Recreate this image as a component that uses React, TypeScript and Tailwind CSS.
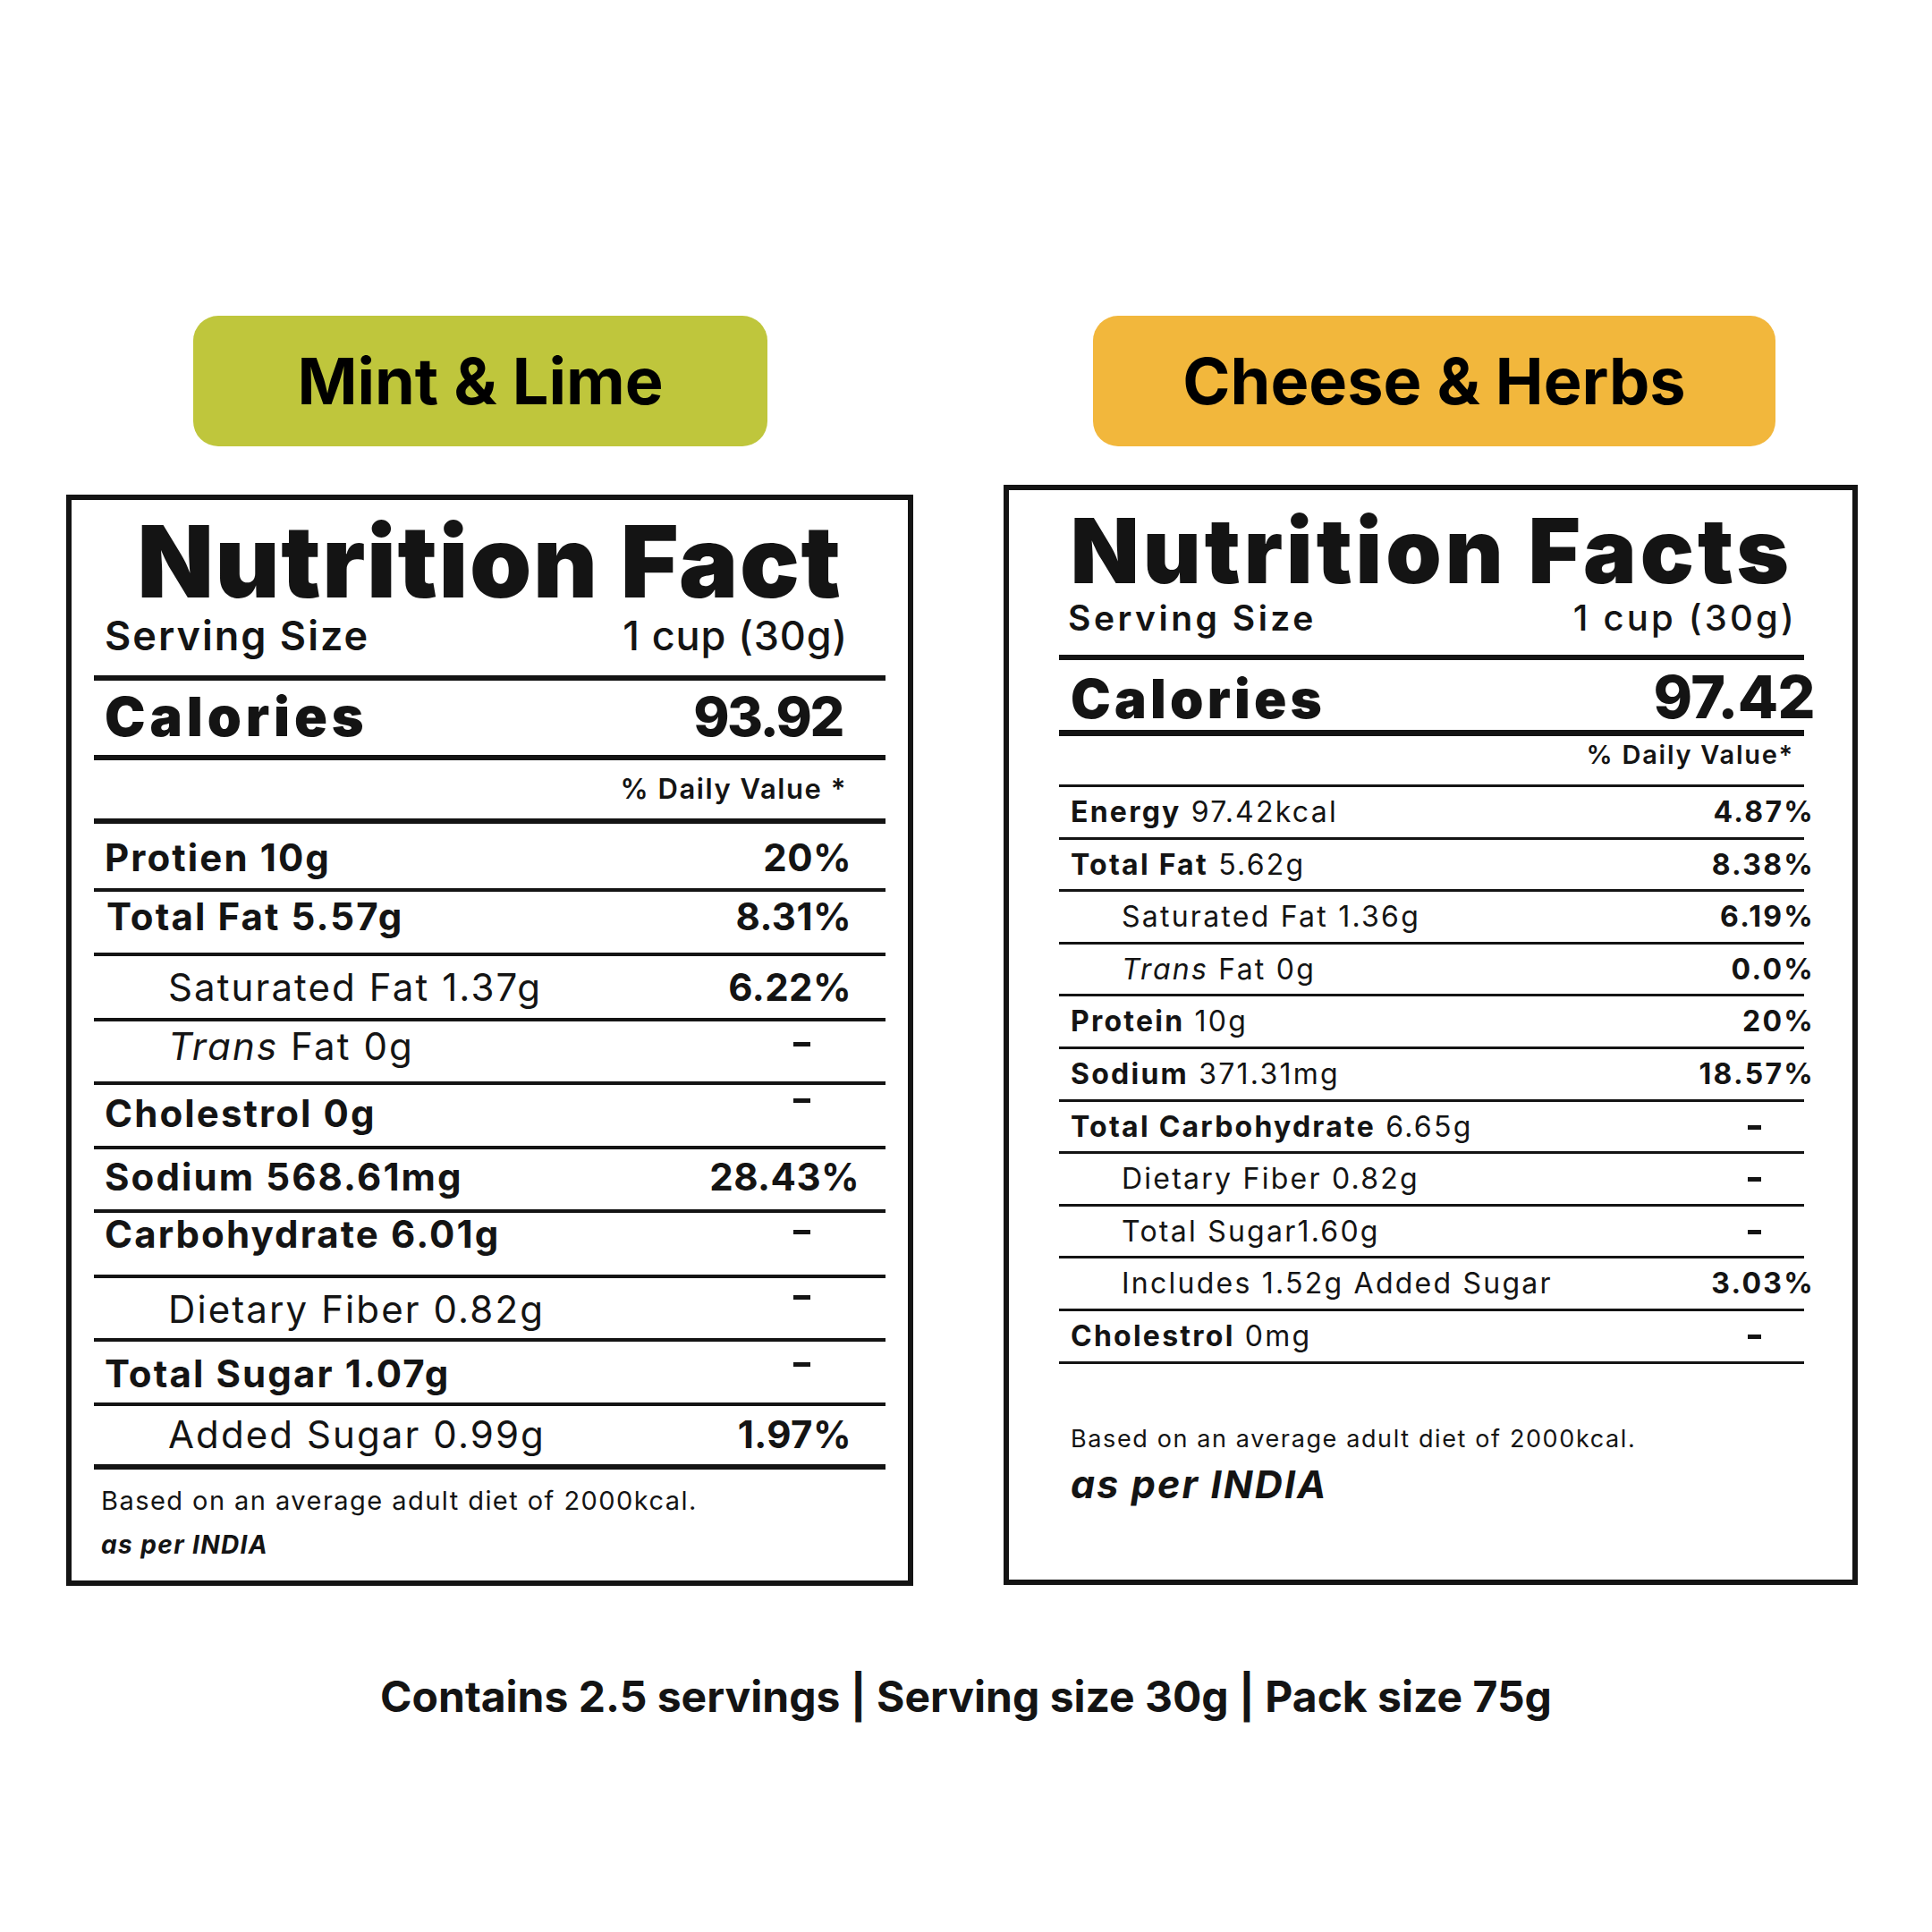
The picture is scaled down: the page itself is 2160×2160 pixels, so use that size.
import React from "react";

type RowL = {
  label: React.ReactNode;
  value?: string;
  cls: string;
  labelCls: string;
  valueCls?: string;
  dashCls?: string;
  borderCls: string;
};

const Dash = ({ cls }: { cls: string }) => (
  <div className={"h-[5px] bg-[#141414] " + cls} />
);

const leftRows: RowL[] = [
  { label: "Protien 10g", value: "20%", cls: "h-[72px] pt-[17px]", labelCls: "pl-[12px] font-bold", valueCls: "pr-[38px]", borderCls: "h-[4px]" },
  { label: "Total Fat 5.57g", value: "8.31%", cls: "h-[68px] pt-[7px]", labelCls: "pl-[14px] font-bold", valueCls: "pr-[38px]", borderCls: "h-[4px]" },
  { label: "Saturated Fat 1.37g", value: "6.22%", cls: "h-[69px] pt-[14px]", labelCls: "pl-[83px] font-normal", valueCls: "pr-[38px]", borderCls: "h-[4px]" },
  { label: (<><span className="italic">Trans</span> Fat 0g</>), cls: "h-[67px] pt-[7px]", labelCls: "pl-[83px] font-normal", dashCls: "w-[19px] mr-[84px] mt-[16px]", borderCls: "h-[4px]" },
  { label: "Cholestrol 0g", cls: "h-[68px] pt-[11px]", labelCls: "pl-[12px] font-bold", dashCls: "w-[19px] mr-[84px] mt-[4px]", borderCls: "h-[4px]" },
  { label: "Sodium 568.61mg", value: "28.43%", cls: "h-[67px] pt-[10px]", labelCls: "pl-[12px] font-bold", valueCls: "pr-[29px]", borderCls: "h-[4px]" },
  { label: "Carbohydrate 6.01g", cls: "h-[69px] pt-[3px]", labelCls: "pl-[12px] font-bold", dashCls: "w-[19px] mr-[84px] mt-[16px]", borderCls: "h-[4px]" },
  { label: "Dietary Fiber 0.82g", cls: "h-[67px] pt-[14px]", labelCls: "pl-[83px] font-normal", dashCls: "w-[19px] mr-[84px] mt-[5px]", borderCls: "h-[4px]" },
  { label: "Total Sugar 1.07g", cls: "h-[68px] pt-[15px]", labelCls: "pl-[12px] font-bold", dashCls: "w-[19px] mr-[84px] mt-[8px]", borderCls: "h-[4px]" },
  { label: "Added Sugar 0.99g", value: "1.97%", cls: "h-[65px] pt-[11px]", labelCls: "pl-[83px] font-normal", valueCls: "pr-[38px]", borderCls: "h-[6px]" },
];

type RowR = {
  bold: string;
  rest: React.ReactNode;
  value?: string;
  indent?: boolean;
};

const rightRows: RowR[] = [
  { bold: "Energy", rest: " 97.42kcal", value: "4.87%" },
  { bold: "Total Fat", rest: " 5.62g", value: "8.38%" },
  { bold: "", rest: "Saturated Fat 1.36g", value: "6.19%", indent: true },
  { bold: "", rest: (<><span className="italic">Trans</span> Fat 0g</>), value: "0.0%", indent: true },
  { bold: "Protein", rest: " 10g", value: "20%" },
  { bold: "Sodium", rest: " 371.31mg", value: "18.57%" },
  { bold: "Total Carbohydrate", rest: " 6.65g" },
  { bold: "", rest: "Dietary Fiber 0.82g", indent: true },
  { bold: "", rest: "Total Sugar1.60g", indent: true },
  { bold: "", rest: "Includes 1.52g Added Sugar", value: "3.03%", indent: true },
  { bold: "Cholestrol", rest: " 0mg" },
];

function LeftPanel() {
  return (
    <div className="w-[947px] h-[1220px] border-[6px] border-[#141414] px-[25px] flex flex-col text-[#141414]">
      <div className="h-[196px] pt-[13px] flex flex-col">
        <div className="text-[111px] leading-none font-black text-center tracking-[0.015em]">Nutrition Fact</div>
        <div className="mt-[5px] flex justify-between items-baseline pl-[12px] pr-[42px] text-[45px] leading-none">
          <span className="font-semibold tracking-[0.045em]">Serving Size</span>
          <span className="font-medium tracking-[0.02em]">1 cup (30g)</span>
        </div>
      </div>
      <div className="h-[6px] bg-[#141414]" />
      <div className="h-[83px] pt-[10px] flex justify-between items-baseline pl-[12px] pr-[48px] text-[61px] leading-none font-black">
        <span className="tracking-[0.08em]">Calories</span>
        <span className="font-extrabold tracking-[-0.04em]">93.92</span>
      </div>
      <div className="h-[6px] bg-[#141414]" />
      <div className="h-[65px] pt-[16px] flex justify-end pr-[43px] text-[31px] leading-none font-semibold tracking-[0.05em]">
        % Daily Value *
      </div>
      <div className="h-[6px] bg-[#141414]" />
      {leftRows.map((r, i) => (
        <React.Fragment key={i}>
          <div className={"flex justify-between items-start text-[42px] leading-none tracking-[0.05em] " + r.cls}>
            <span className={r.labelCls}>{r.label}</span>
            {r.value ? (
              <span className={"font-bold tracking-[0.01em] " + (r.valueCls ?? "")}>{r.value}</span>
            ) : (
              <Dash cls={r.dashCls ?? ""} />
            )}
          </div>
          <div className={"bg-[#141414] " + r.borderCls} />
        </React.Fragment>
      ))}
      <div className="pt-[20px] pl-[8px] flex flex-col">
        <div className="text-[29px] leading-none tracking-[0.05em]">Based on an average adult diet of 2000kcal.</div>
        <div className="mt-[21px] text-[28px] leading-none font-bold italic tracking-[0.05em]">as per INDIA</div>
      </div>
    </div>
  );
}

function RightPanel() {
  return (
    <div className="w-[955px] h-[1230px] border-[6px] border-[#141414] pl-[56px] pr-[54px] flex flex-col text-[#141414]">
      <div className="h-[184px] pt-[18px] flex flex-col">
        <div className="text-[100px] leading-none font-black text-center tracking-[0.04em]">Nutrition Facts</div>
        <div className="mt-[5px] flex justify-between items-baseline pl-[10px] pr-[8px] text-[39px] leading-none">
          <span className="font-semibold tracking-[0.09em]">Serving Size</span>
          <span className="font-medium text-[40px] tracking-[0.08em]">1 cup (30g)</span>
        </div>
      </div>
      <div className="h-[6px] bg-[#141414]" />
      <div className="h-[78px] pt-[8px] flex justify-between items-baseline pl-[13px] -mr-[12px] leading-none font-black">
        <span className="text-[60px] tracking-[0.07em]">Calories</span>
        <span className="text-[66px] font-extrabold tracking-[-0.01em]">97.42</span>
      </div>
      <div className="h-[7px] bg-[#141414]" />
      <div className="h-[54px] pt-[6px] flex justify-end pr-[11px] text-[29px] leading-none font-semibold tracking-[0.06em]">
        % Daily Value*
      </div>
      <div className="h-[3px] bg-[#141414]" />
      {rightRows.map((r, i) => (
        <React.Fragment key={i}>
          <div className="h-[55.6px] pt-[12px] flex justify-between items-start text-[32px] leading-none tracking-[0.07em]">
            <span className={r.indent ? "pl-[70px]" : "pl-[13px]"}>
              {r.bold ? <span className="font-bold">{r.bold}</span> : null}
              <span className="font-normal">{r.rest}</span>
            </span>
            {r.value ? (
              <span className="font-bold -mr-[12px]">{r.value}</span>
            ) : (
              <Dash cls="w-[15px] mr-[48px] mt-[14px]" />
            )}
          </div>
          <div className="h-[3px] bg-[#141414]" />
        </React.Fragment>
      ))}
      <div className="mt-[70px] pl-[13px] flex flex-col">
        <div className="text-[27px] leading-none tracking-[0.06em]">Based on an average adult diet of 2000kcal.</div>
        <div className="mt-[16px] text-[43px] leading-none font-bold italic tracking-[0.05em]">as per INDIA</div>
      </div>
    </div>
  );
}

export default function App() {
  return (
    <div className="w-[2160px] h-[2160px] bg-white [font-family:Inter,'Noto_Sans',sans-serif] text-[#141414] pt-[353px] flex flex-col">
      <div className="flex">
        <div className="ml-[74px] w-[947px] flex flex-col">
          <div className="ml-[142px] w-[642px] h-[146px] rounded-[28px] bg-[#bfc63c] flex items-center justify-center">
            <span className="text-[72px] font-bold leading-none text-black">Mint &amp; Lime</span>
          </div>
          <div className="mt-[54px]">
            <LeftPanel />
          </div>
        </div>
        <div className="ml-[101px] w-[955px] flex flex-col">
          <div className="ml-[100px] w-[763px] h-[146px] rounded-[28px] bg-[#f2b73c] flex items-center justify-center">
            <span className="text-[72px] font-bold leading-none text-black">Cheese &amp; Herbs</span>
          </div>
          <div className="mt-[43px]">
            <RightPanel />
          </div>
        </div>
      </div>
      <div className="mt-[100px] text-center text-[48px] font-bold leading-none">
        Contains 2.5 servings | Serving size 30g | Pack size 75g
      </div>
    </div>
  );
}
